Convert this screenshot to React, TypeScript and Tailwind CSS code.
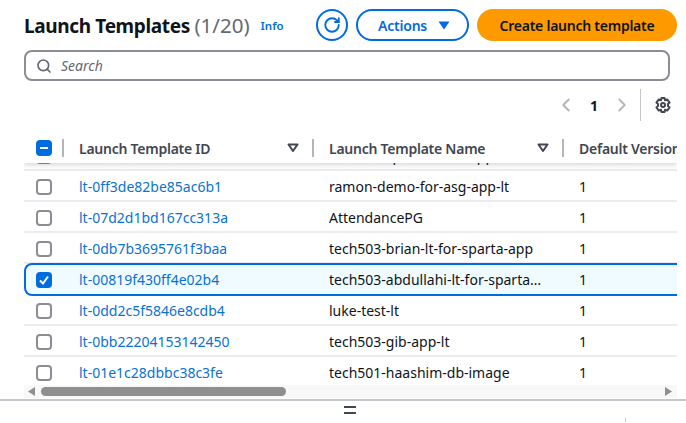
import { ChevronLeft, ChevronRight, RotateCw, Search } from "lucide-react";

const rows = [
  { id: "lt-0ff3de82be85ac6b1", name: "ramon-demo-for-asg-app-lt" },
  { id: "lt-07d2d1bd167cc313a", name: "AttendancePG" },
  { id: "lt-0db7b3695761f3baa", name: "tech503-brian-lt-for-sparta-app" },
  { id: "lt-00819f430ff4e02b4", name: "tech503-abdullahi-lt-for-sparta-app", selected: true },
  { id: "lt-0dd2c5f5846e8cdb4", name: "luke-test-lt" },
  { id: "lt-0bb22204153142450", name: "tech503-gib-app-lt" },
  { id: "lt-01e1c28dbbc38c3fe", name: "tech501-haashim-db-image" },
];

function Checkbox({ checked }: { checked?: boolean }) {
  if (checked) {
    return (
      <span className="flex h-4 w-4 items-center justify-center rounded-[4px] bg-[#006ce0]">
        <svg width="12" height="12" viewBox="0 0 12 12" fill="none">
          <path d="M2 6.5 L5 9.5 L10 2.5" stroke="white" strokeWidth="2" />
        </svg>
      </span>
    );
  }
  return <span className="block h-4 w-4 rounded-[4px] border-2 border-[#8c8c94] bg-white" />;
}

function Caret() {
  return (
    <svg width="12" height="10" viewBox="0 0 12 10" fill="none">
      <path d="M1.5 1.5 H10.5 L6 8 Z" stroke="#424650" strokeWidth="2" strokeLinejoin="round" />
    </svg>
  );
}

function Gear() {
  return (
    <svg width="16" height="16" viewBox="0 0 16 16" fill="none" stroke="#424650" strokeWidth="2" strokeLinejoin="round">
      <path d="M6.5 1 H9.5 L10 3.2 L12.2 2.4 L14.6 5.6 L13 7 V9 L14.6 10.4 L12.2 13.6 L10 12.8 L9.5 15 H6.5 L6 12.8 L3.8 13.6 L1.4 10.4 L3 9 V7 L1.4 5.6 L3.8 2.4 L6 3.2 Z" />
      <circle cx="8" cy="8" r="2" />
    </svg>
  );
}

function HeaderCell({ label }: { label: string }) {
  return (
    <div className="flex w-[250px] shrink-0 items-center">
      <div className="h-[18px] w-[2px] shrink-0 bg-[#b4b4bb]" />
      <span className="ml-[15px] pt-[1px] text-[14px] leading-[20px] font-semibold tracking-[-0.25px] text-[#424650]">{label}</span>
      <span className="ml-auto mr-[13px] flex">
        <Caret />
      </span>
    </div>
  );
}

function Row({ id, name, selected }: { id: string; name: string; selected?: boolean }) {
  return (
    <div
      className={
        selected
          ? "relative z-10 -my-[1px] flex h-[33px] w-[680px] items-center rounded-l-[8px] border-2 border-r-0 border-[#006ce0] bg-[#f0fbff]"
          : "flex h-[31px] w-[680px] items-center border-b-2 border-[#ebebf0] pt-[2px]"
      }
    >
      <div className={selected ? "flex w-[53px] shrink-0 pl-[10px]" : "flex w-[55px] shrink-0 pl-[12px]"}>
        <Checkbox checked={selected} />
      </div>
      <div className="w-[250px] shrink-0 text-[14px] text-[#0972d3]">{id}</div>
      <div className="w-[250px] shrink-0 truncate pr-[37px] text-[14px] text-[#0f141a]">{name}</div>
      <div className="text-[14px] text-[#0f141a]">1</div>
    </div>
  );
}

export default function App() {
  return (
    <div className="h-[423px] w-[686px] overflow-hidden bg-white font-['Noto_Sans','Open_Sans',sans-serif]">
      <div className="pt-[9px] pl-[24px] pr-[9px]">
        <div className="flex h-[32px] items-center">
          <h1 className="text-[19px] leading-[32px] font-bold tracking-[-0.35px] text-[#0f141a]">
            Launch Templates <span className="text-[20.5px] font-normal tracking-normal text-[#656871]">(1/20)</span>
          </h1>
          <span className="ml-[11px] mt-[2px] text-[11.5px] font-semibold text-[#006ce0]">Info</span>
          <button className="ml-auto flex h-[32px] w-[32px] items-center justify-center rounded-full border-2 border-[#006ce0] text-[#006ce0]">
            <RotateCw size={18} strokeWidth={2.5} />
          </button>
          <button className="ml-[8px] flex h-[32px] w-[113px] items-center justify-center gap-[11px] rounded-full border-2 border-[#006ce0] pl-[3px] text-[14px] font-semibold tracking-[-0.2px] text-[#006ce0]">
            Actions
            <svg width="12" height="9" viewBox="0 0 12 9">
              <path d="M0.5 0.5 H11.5 L6 8.5 Z" fill="#006ce0" />
            </svg>
          </button>
          <button className="ml-[8px] flex h-[32px] w-[200px] items-center justify-center rounded-full bg-[#ff9900] text-[14px] font-semibold tracking-[-0.25px] text-[#0f141a]">
            Create launch template
          </button>
        </div>

        <div className="mt-[9px] mr-[7px] flex h-[31px] items-center rounded-[8px] border-2 border-[#8c8c94] pl-[10px]">
          <Search size={16} strokeWidth={2.5} className="text-[#656871]" />
          <span className="ml-[9px] text-[14px] text-[#656871] italic">Search</span>
        </div>

        <div className="mt-[8px] mr-[6px] flex h-[32px] items-center justify-end">
          <ChevronLeft size={22} strokeWidth={2} className="text-[#b4b4bb]" />
          <span className="mx-[13px] text-[14px] font-bold text-[#0f141a]">1</span>
          <ChevronRight size={22} strokeWidth={2} className="text-[#b4b4bb]" />
          <div className="mr-[14px] ml-[7px] h-[32px] w-[1px] bg-[#c6c6cd]" />
          <Gear />
        </div>

        <div className="mt-[12px] w-[653px] overflow-hidden">
          <div className="relative z-20 flex h-[30px] items-center bg-white shadow-[0_2px_5px_rgba(0,7,22,0.16)]">
            <div className="flex w-[38px] shrink-0 pl-[12px]">
              <span className="flex h-4 w-4 items-center justify-center rounded-[4px] bg-[#006ce0]">
                <span className="h-[2px] w-[8px] bg-white" />
              </span>
            </div>
            <HeaderCell label="Launch Template ID" />
            <HeaderCell label="Launch Template Name" />
            <div className="flex w-[115px] shrink-0 items-center overflow-hidden">
              <div className="h-[18px] w-[2px] shrink-0 bg-[#b4b4bb]" />
              <span className="ml-[15px] pt-[1px] text-[14px] leading-[20px] font-semibold tracking-[-0.25px] whitespace-nowrap text-[#424650]">
                Default Version
              </span>
            </div>
          </div>

          <div className="h-[222px] overflow-hidden">
            <div className="-mt-[23px]">
              <Row id="lt-0a1b2c3d4e5f60718" name="tech503-sparta-lt-for-app" />
              {rows.map((row) => (
                <Row key={row.id} {...row} />
              ))}
            </div>
          </div>

          <div className="flex h-[13px] items-center bg-[#f8f8f8] pl-[3px]">
            <svg width="9" height="9" viewBox="0 0 9 9">
              <path d="M8 0 V9 L1 4.5 Z" fill="#8f8f8f" />
            </svg>
            <div className="ml-[5px] h-[9px] w-[245px] rounded-full bg-[#8f8f8f]" />
            <svg className="mr-[4px] ml-auto" width="9" height="9" viewBox="0 0 9 9">
              <path d="M1 0 V9 L8 4.5 Z" fill="#8f8f8f" />
            </svg>
          </div>
        </div>
      </div>

      <div className="mt-[1px] flex h-[23px] w-full flex-col border-t-2 border-[#c6c6cd]">
        <div className="mt-[5px] ml-[344px] flex h-[8px] w-[12px] flex-col justify-between">
          <div className="h-[2px] bg-[#424650]" />
          <div className="h-[2px] bg-[#424650]" />
        </div>
        <div className="mt-auto ml-[625px] h-[4px] w-[1px] bg-[#c6c6cd]" />
      </div>
    </div>
  );
}
